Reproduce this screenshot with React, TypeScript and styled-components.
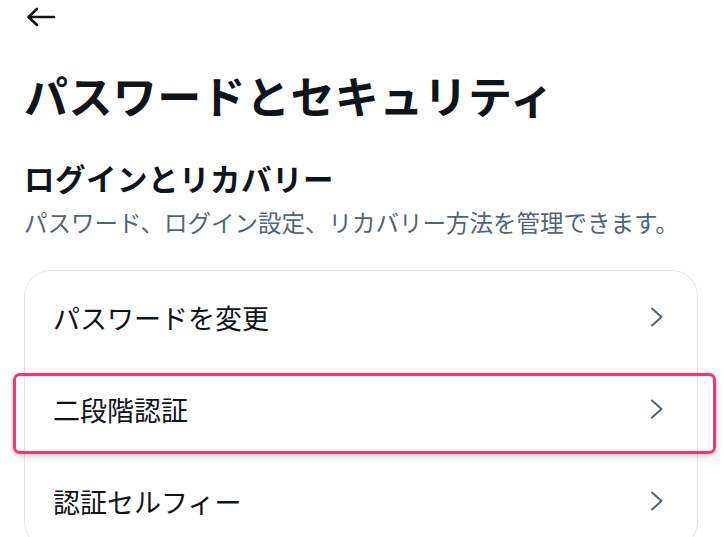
import React from 'react';
import styled, { createGlobalStyle } from 'styled-components';

const GlobalStyle = createGlobalStyle`
    html, body {
        margin: 0;
        padding: 0;
        background: #fff;
        overflow: hidden;
    }
    body {
        font-family: "Noto Sans CJK JP", "Noto Sans", sans-serif;
        color: #0f1419;
    }
`

const Page = styled.div`
    width: 724px;
    height: 537px;
    padding: 0 26px 0 24px;
    box-sizing: border-box;
    overflow: hidden;
`

const TopBar = styled.div`
    height: 34px;
    display: flex;
    align-items: center;
`

const BackButton = styled.button`
    border: none;
    background: none;
    padding: 0 0 0 2px;
    display: flex;
    color: #0f1419;
    cursor: pointer;
`

const Title = styled.h1`
    margin: 39px 0 0;
    font-size: 44px;
    line-height: 1;
    font-weight: 700;
    letter-spacing: 0.4px;
`

const SectionTitle = styled.h2`
    margin: 46px 0 0;
    font-size: 30.5px;
    line-height: 1;
    font-weight: 700;
    letter-spacing: 0.5px;
`

const SectionNote = styled.p`
    margin: 17px 0 0;
    font-size: 23.5px;
    line-height: 1;
    color: #536471;
    white-space: nowrap;
`

const Card = styled.div`
    margin-top: 36px;
    border: 1.5px solid #e1e4e6;
    border-radius: 26px;
`

const Row = styled.div<{ $highlighted?: boolean }>`
    position: relative;
    height: 92px;
    display: flex;
    align-items: center;
    justify-content: space-between;
    padding: 0 33px 0 28px;
    cursor: pointer;

    ${({ $highlighted }) => $highlighted && `
        &::after {
            content: '';
            position: absolute;
            top: 10px;
            bottom: 1px;
            left: -12px;
            right: -19px;
            border: 3.5px solid #f7346d;
            border-radius: 7px;
            box-shadow: 0 2px 6px rgba(0, 0, 0, 0.22);
            pointer-events: none;
        }
    `}
`

const RowLabel = styled.span`
    font-size: 27px;
    line-height: 1;
    color: #0f1419;
`

const Chevron = () => (
    <svg width="14" height="20" viewBox="0 0 14 20" fill="none">
        <path d="M2 1.5 L11.5 10 L2 18.5" stroke="#536471" strokeWidth="2" strokeLinecap="round" strokeLinejoin="round" />
    </svg>
)

const BackArrow = () => (
    <svg width="30" height="20" viewBox="0 0 30 20" fill="none">
        <path d="M28 10 H3 M11 2 L2.5 10 L11 18" stroke="#0f1419" strokeWidth="2.6" strokeLinecap="round" strokeLinejoin="round" />
    </svg>
)

const items = [
    { label: 'パスワードを変更' },
    { label: '二段階認証', highlighted: true },
    { label: '認証セルフィー' },
]

export default function App() {
    return (
        <Page>
            <GlobalStyle />
            <TopBar>
                <BackButton aria-label="戻る"><BackArrow /></BackButton>
            </TopBar>
            <Title>パスワードとセキュリティ</Title>
            <SectionTitle>ログインとリカバリー</SectionTitle>
            <SectionNote>パスワード、ログイン設定、リカバリー方法を管理できます。</SectionNote>
            <Card>
                {items.map((item) => (
                    <Row key={item.label} $highlighted={item.highlighted}>
                        <RowLabel>{item.label}</RowLabel>
                        <Chevron />
                    </Row>
                ))}
            </Card>
        </Page>
    )
}
